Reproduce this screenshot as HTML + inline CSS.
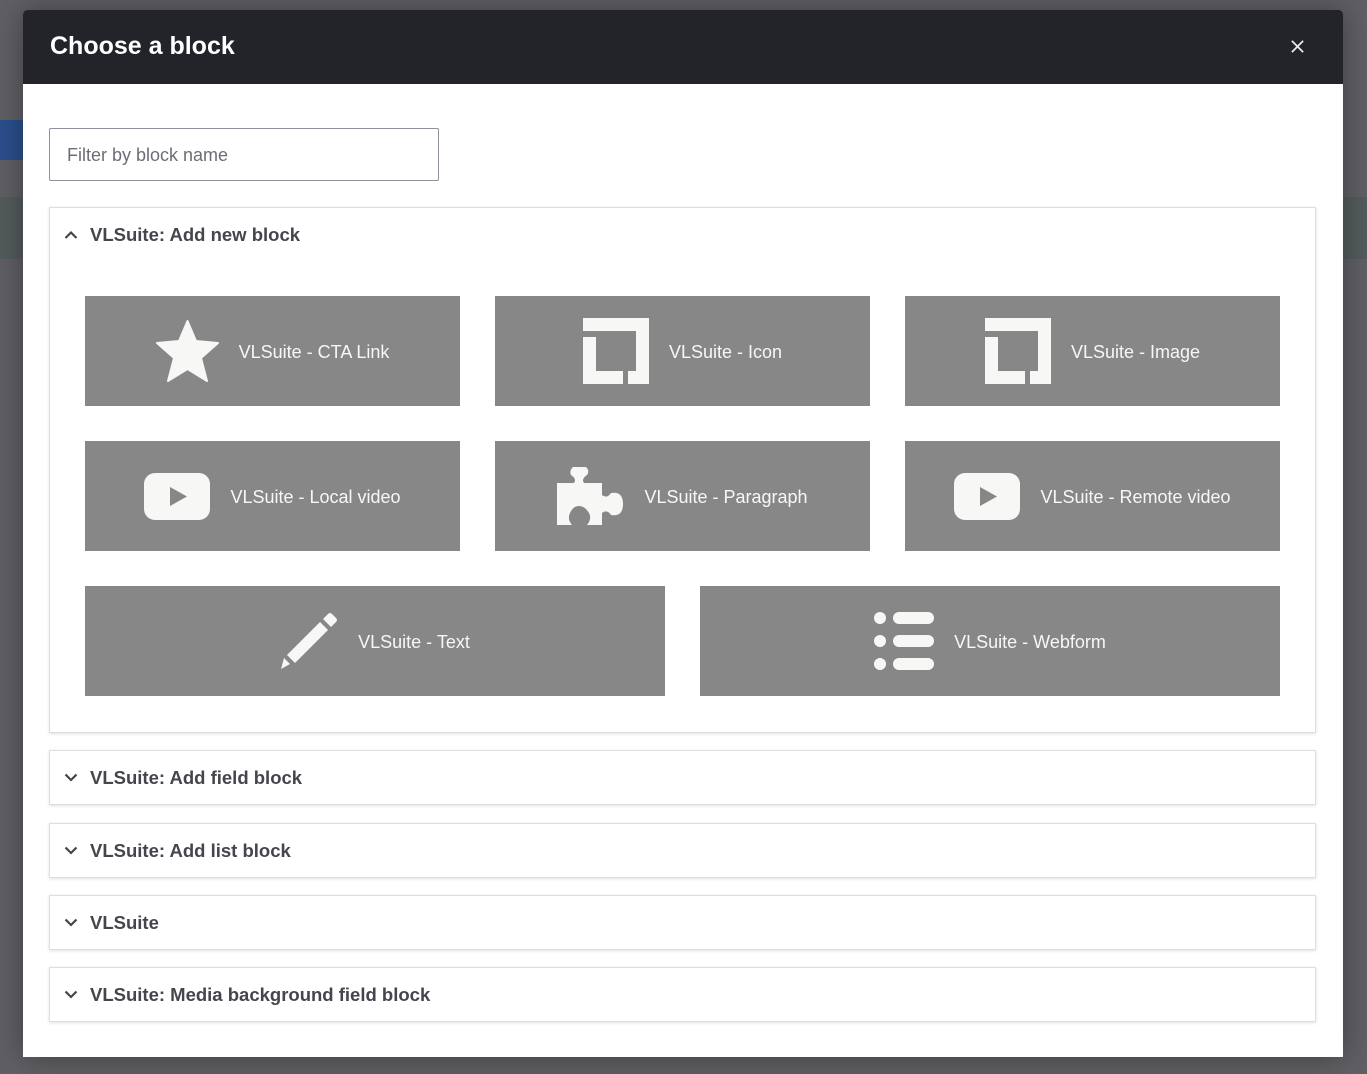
<!DOCTYPE html>
<html><head><meta charset="utf-8"><style>
*{box-sizing:border-box;margin:0;padding:0}
html,body{width:1367px;height:1074px;overflow:hidden;background:#5f5f64;font-family:"Liberation Sans",sans-serif}
.bg1{position:absolute;left:0;top:120px;width:30px;height:40px;background:#2b4f8c}
.bg2{position:absolute;left:0;top:197px;width:1367px;height:62px;background:#545b5c}
.dlg{position:absolute;left:23px;top:10px;width:1320px;height:1047px;background:#fff;border-radius:4px 4px 0 0;overflow:hidden;box-shadow:0 0 30px rgba(0,0,0,.35)}
.hd{height:74px;background:#232429;color:#fff;font-weight:bold;font-size:25px;padding:22px 0 0 27px;position:relative}
.x{position:absolute;right:38px;top:29px;width:15px;height:15px}
.inp{position:absolute;left:26px;top:118px;width:390px;height:53px;border:1px solid #8e929c;border-radius:2px;color:#6b6e75;font-size:18px;padding:16px 0 0 17px}
.sec{position:absolute;left:26px;width:1267px;border:1px solid #dedee2;box-shadow:0 1px 3px rgba(0,0,0,.12);background:#fff}
.sh{height:54px;padding:16px 0 0 40px;font-weight:bold;font-size:18.5px;color:#45464d;position:relative}
.sh svg{position:absolute;left:14px;top:22px}
.t{position:absolute;height:110px;background:#878787;display:flex;align-items:center;justify-content:center;gap:20px;color:#f7f7f5;font-size:18px}
.t span{position:relative;top:1px}
</style></head><body>
<div class="bg1"></div><div class="bg2"></div>
<div class="dlg">
<div class="hd">Choose a block<svg class="x" viewBox="0 0 16 16"><path d="M2 2L14 14M14 2L2 14" stroke="#eee" stroke-width="1.8"/></svg></div>
<div class="inp">Filter by block name</div>
<div class="sec" style="top:197px;height:526px">
<div class="sh"><svg width="14" height="9" viewBox="0 0 14 9"><path d="M1.5 8L7 2.5L12.5 8" stroke="#45464d" stroke-width="2.2" fill="none"/></svg>VLSuite: Add new block</div>
</div>
<div class="t" style="left:62px;top:286px;width:375px"><svg width="63" height="62" viewBox="0 0 63 62"><path d="M31.5 1L40 21L62 23L45 38L51 61L31.5 49L12 61L18 38L1 23L23 21Z" fill="#f7f7f5" stroke="#f7f7f5" stroke-width="2" stroke-linejoin="round"/></svg><span>VLSuite - CTA Link</span></div>
<div class="t" style="left:472px;top:286px;width:375px"><svg width="66" height="66" viewBox="0 0 66 66"><path fill="#f7f7f5" fill-rule="evenodd" d="M0 0H66V66H45V53H53V13H13V53H40V66H0V19H0Z M0 13H13V19H0Z"/></svg><span>VLSuite - Icon</span></div>
<div class="t" style="left:882px;top:286px;width:375px"><svg width="66" height="66" viewBox="0 0 66 66"><path fill="#f7f7f5" fill-rule="evenodd" d="M0 0H66V66H45V53H53V13H13V53H40V66H0V19H0Z M0 13H13V19H0Z"/></svg><span>VLSuite - Image</span></div>
<div class="t" style="left:62px;top:431px;width:375px"><svg width="66" height="47" viewBox="0 0 66 47"><rect width="66" height="47" rx="11" fill="#f7f7f5"/><path d="M26 14L43 23.5L26 33Z" fill="#878787"/></svg><span>VLSuite - Local video</span></div>
<div class="t" style="left:472px;top:431px;width:375px"><svg width="67" height="60" viewBox="10 7 67 60"><path fill="#f7f7f5" d="M10 24H27Q30 20 24 16Q22 12 26 8H39Q43 12 40 16Q34 20 37 24H55V36Q60 40 64 34Q76 32 76 45Q76 58 64 56Q60 50 55 54V66H40Q45 60 42 54Q38 47 32 47Q26 47 23 54Q20 60 25 66H10Z"/></svg><span>VLSuite - Paragraph</span></div>
<div class="t" style="left:882px;top:431px;width:375px"><svg width="66" height="47" viewBox="0 0 66 47"><rect width="66" height="47" rx="11" fill="#f7f7f5"/><path d="M26 14L43 23.5L26 33Z" fill="#878787"/></svg><span>VLSuite - Remote video</span></div>
<div class="t" style="left:62px;top:576px;width:580px"><svg width="58" height="58" viewBox="0 0 58 58"><path fill="#f7f7f5" d="M1 57L4 46L10 52Z M7 43L40 10L48 18L15 51Z M43 7L48 2Q50 0 52 2L56 6Q58 8 56 10L51 15Z"/></svg><span>VLSuite - Text</span></div>
<div class="t" style="left:677px;top:576px;width:580px"><svg width="60" height="58" viewBox="0 0 60 58"><g fill="#f7f7f5"><circle cx="6" cy="6" r="6"/><circle cx="6" cy="29" r="6"/><circle cx="6" cy="52" r="6"/><rect x="19" y="0" width="41" height="12" rx="6"/><rect x="19" y="23" width="41" height="12" rx="6"/><rect x="19" y="46" width="41" height="12" rx="6"/></g></svg><span>VLSuite - Webform</span></div>
<div class="sec" style="top:740px;height:55px"><div class="sh"><svg width="14" height="9" viewBox="0 0 14 9"><path d="M1.5 1.5L7 7L12.5 1.5" stroke="#45464d" stroke-width="2.2" fill="none"/></svg>VLSuite: Add field block</div></div>
<div class="sec" style="top:813px;height:55px"><div class="sh"><svg width="14" height="9" viewBox="0 0 14 9"><path d="M1.5 1.5L7 7L12.5 1.5" stroke="#45464d" stroke-width="2.2" fill="none"/></svg>VLSuite: Add list block</div></div>
<div class="sec" style="top:885px;height:55px"><div class="sh"><svg width="14" height="9" viewBox="0 0 14 9"><path d="M1.5 1.5L7 7L12.5 1.5" stroke="#45464d" stroke-width="2.2" fill="none"/></svg>VLSuite</div></div>
<div class="sec" style="top:957px;height:55px"><div class="sh"><svg width="14" height="9" viewBox="0 0 14 9"><path d="M1.5 1.5L7 7L12.5 1.5" stroke="#45464d" stroke-width="2.2" fill="none"/></svg>VLSuite: Media background field block</div></div>
</div>
</body></html>
